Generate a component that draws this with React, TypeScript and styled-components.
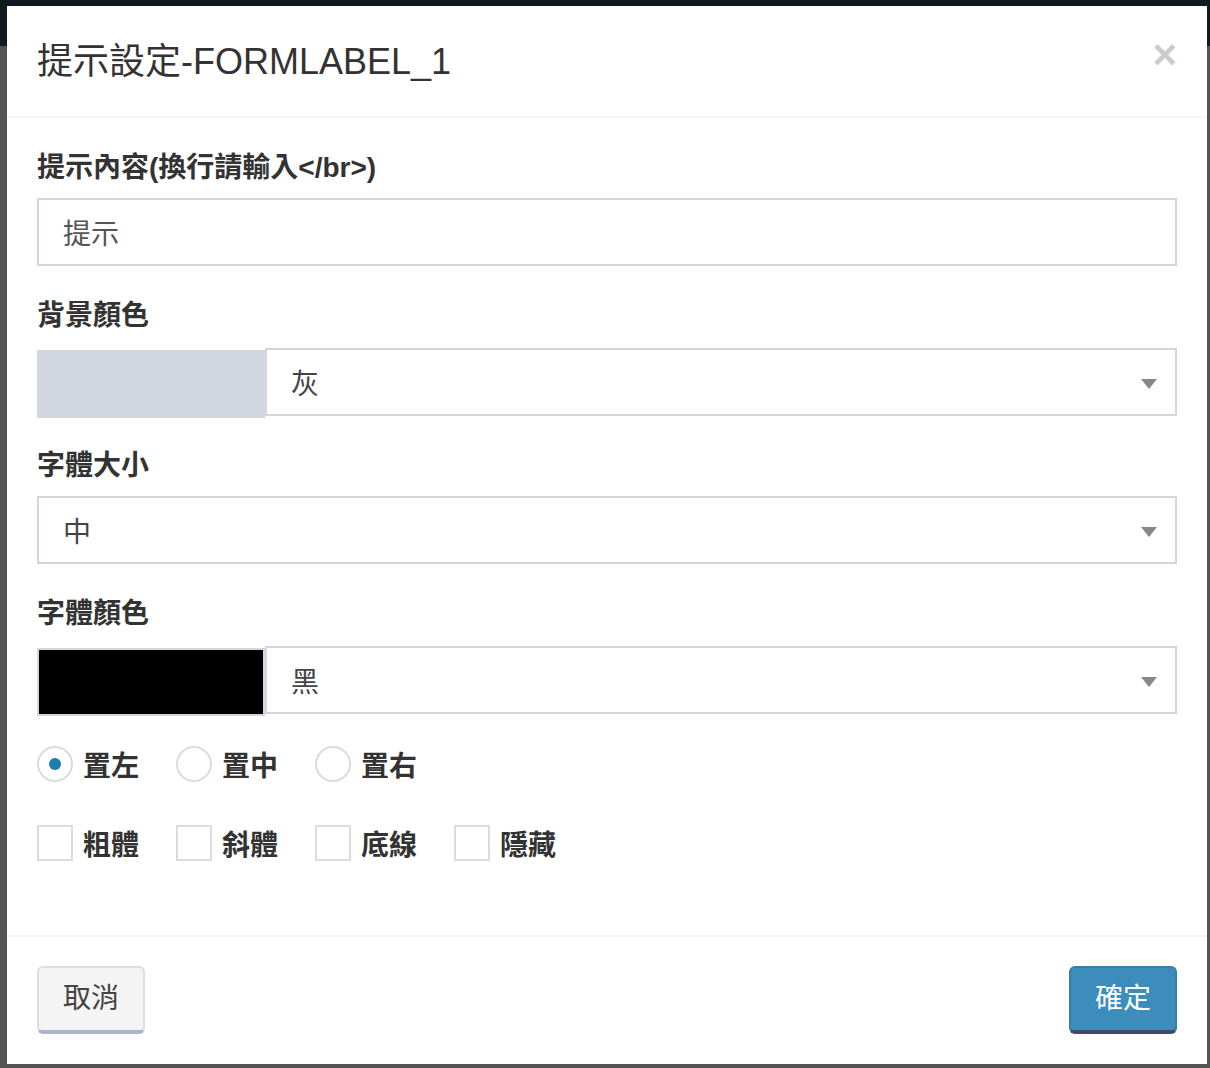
import React, { useState } from 'react'
import styled, { createGlobalStyle } from 'styled-components'

const GlobalStyle = createGlobalStyle`
  html, body {
    margin: 0;
    padding: 0;
  }
  body {
    background: linear-gradient(to bottom, #111a1e 0, #111a1e 46px, #545454 46px, #545454 100%);
    font-family: 'Liberation Sans', 'Noto Sans CJK TC', sans-serif;
    color: #333;
  }
`

const Backdrop = styled.div`
  padding: 6px 3px 5px 7px;
`

const Modal = styled.div`
  width: 1200px;
  background: #fff;
`

const Header = styled.div`
  display: flex;
  align-items: flex-start;
  justify-content: space-between;
  padding: 30px 30px 29px;
  border-bottom: 2px solid #f4f4f4;
`

const Title = styled.h4`
  margin: 0;
  font-size: 36px;
  font-weight: 400;
  line-height: 51px;
  color: #333;
`

const Close = styled.button`
  background: none;
  border: none;
  padding: 0;
  margin-top: -2px;
  font-family: 'Liberation Sans', sans-serif;
  font-size: 42px;
  font-weight: 700;
  line-height: 1;
  color: #000;
  opacity: 0.2;
  cursor: pointer;
`

const Body = styled.div`
  padding: 30px 30px 32px;
`

const FormGroup = styled.div<{ $tight?: boolean }>`
  margin-bottom: ${({ $tight }) => ($tight ? 28 : 30)}px;
`

const Label = styled.label<{ $tight?: boolean }>`
  display: block;
  margin-bottom: ${({ $tight }) => ($tight ? 12 : 10)}px;
  font-size: 28px;
  font-weight: 700;
  line-height: 40px;
  color: #333;
`

const TextInput = styled.input`
  display: block;
  box-sizing: border-box;
  width: 100%;
  height: 68px;
  padding: 12px 24px;
  border: 2px solid #d2d6de;
  border-radius: 0;
  font-family: 'Liberation Sans', 'Noto Sans CJK TC', sans-serif;
  font-size: 28px;
  color: #555;
  outline: none;
`

const ColorRow = styled.div`
  display: flex;
  align-items: flex-start;
`

const Swatch = styled.div<{ $color: string }>`
  box-sizing: border-box;
  flex: 0 0 20%;
  height: 68px;
  margin-top: 2px;
  border: 2px solid #d2d6de;
  background: ${({ $color }) => $color};
`

const SelectBox = styled.div`
  position: relative;
  flex: 1;
  box-sizing: border-box;
  height: 68px;
  padding: 0 24px;
  border: 2px solid #d2d6de;
  display: flex;
  align-items: center;
  font-size: 28px;
  color: #444;
  cursor: pointer;
`

const Arrow = styled.span`
  position: absolute;
  right: 18px;
  top: 29px;
  width: 0;
  height: 0;
  border-style: solid;
  border-width: 10px 8px 0 8px;
  border-color: #888 transparent transparent transparent;
`

const OptionRow = styled.div<{ $gap: number }>`
  display: flex;
  align-items: center;
  height: 40px;
  margin-bottom: ${({ $gap }) => $gap}px;
`

const Option = styled.label`
  display: flex;
  align-items: center;
  margin-right: 37px;
  font-size: 28px;
  font-weight: 700;
  color: #333;
  cursor: pointer;
`

const Radio = styled.span<{ $on: boolean }>`
  box-sizing: border-box;
  width: 36px;
  height: 36px;
  border: 2px solid #dcdcdc;
  border-radius: 50%;
  margin-right: 10px;
  display: flex;
  align-items: center;
  justify-content: center;

  &::after {
    content: '';
    width: 12px;
    height: 12px;
    border-radius: 50%;
    background: ${({ $on }) => ($on ? '#1f7cb2' : 'transparent')};
  }
`

const Check = styled.span<{ $on: boolean }>`
  box-sizing: border-box;
  width: 36px;
  height: 36px;
  border: 2px solid #dcdcdc;
  margin-right: 10px;
  background: ${({ $on }) => ($on ? '#1f7cb2' : '#fff')};
`

const Footer = styled.div`
  display: flex;
  justify-content: space-between;
  padding: 29px 30px 30px;
  border-top: 2px solid #f4f4f4;
`

const Button = styled.button<{ $primary?: boolean }>`
  box-sizing: border-box;
  height: 68px;
  padding: 0 24px;
  border: 2px solid ${({ $primary }) => ($primary ? '#367fa9' : '#ddd')};
  border-bottom: 4px solid ${({ $primary }) => ($primary ? '#3d4b66' : '#a9b3c9')};
  border-radius: 6px;
  background: ${({ $primary }) => ($primary ? '#3c8dbc' : '#f4f4f4')};
  color: ${({ $primary }) => ($primary ? '#fff' : '#444')};
  font-family: 'Liberation Sans', 'Noto Sans CJK TC', sans-serif;
  font-size: 28px;
  line-height: 40px;
  cursor: pointer;
`

const aligns = ['置左', '置中', '置右']
const styles = ['粗體', '斜體', '底線', '隱藏']

export default function App() {
  const [align, setAlign] = useState(0)
  const [checked, setChecked] = useState<boolean[]>([false, false, false, false])

  return (
    <>
      <GlobalStyle />
      <Backdrop>
        <Modal>
          <Header>
            <Title>提示設定-FORMLABEL_1</Title>
            <Close>×</Close>
          </Header>
          <Body>
            <FormGroup>
              <Label>提示內容(換行請輸入&lt;/br&gt;)</Label>
              <TextInput defaultValue="提示" />
            </FormGroup>
            <FormGroup $tight>
              <Label $tight>背景顏色</Label>
              <ColorRow>
                <Swatch $color="#d2d6de" />
                <SelectBox>
                  灰
                  <Arrow />
                </SelectBox>
              </ColorRow>
            </FormGroup>
            <FormGroup>
              <Label>字體大小</Label>
              <ColorRow>
                <SelectBox>
                  中
                  <Arrow />
                </SelectBox>
              </ColorRow>
            </FormGroup>
            <FormGroup $tight>
              <Label $tight>字體顏色</Label>
              <ColorRow>
                <Swatch $color="#000" />
                <SelectBox>
                  黑
                  <Arrow />
                </SelectBox>
              </ColorRow>
            </FormGroup>
            <OptionRow $gap={39}>
              {aligns.map((a, i) => (
                <Option key={a} onClick={() => setAlign(i)}>
                  <Radio $on={align === i} />
                  {a}
                </Option>
              ))}
            </OptionRow>
            <OptionRow $gap={40}>
              {styles.map((s, i) => (
                <Option
                  key={s}
                  onClick={() => setChecked(checked.map((c, j) => (j === i ? !c : c)))}
                >
                  <Check $on={checked[i]} />
                  {s}
                </Option>
              ))}
            </OptionRow>
          </Body>
          <Footer>
            <Button>取消</Button>
            <Button $primary>確定</Button>
          </Footer>
        </Modal>
      </Backdrop>
    </>
  )
}
